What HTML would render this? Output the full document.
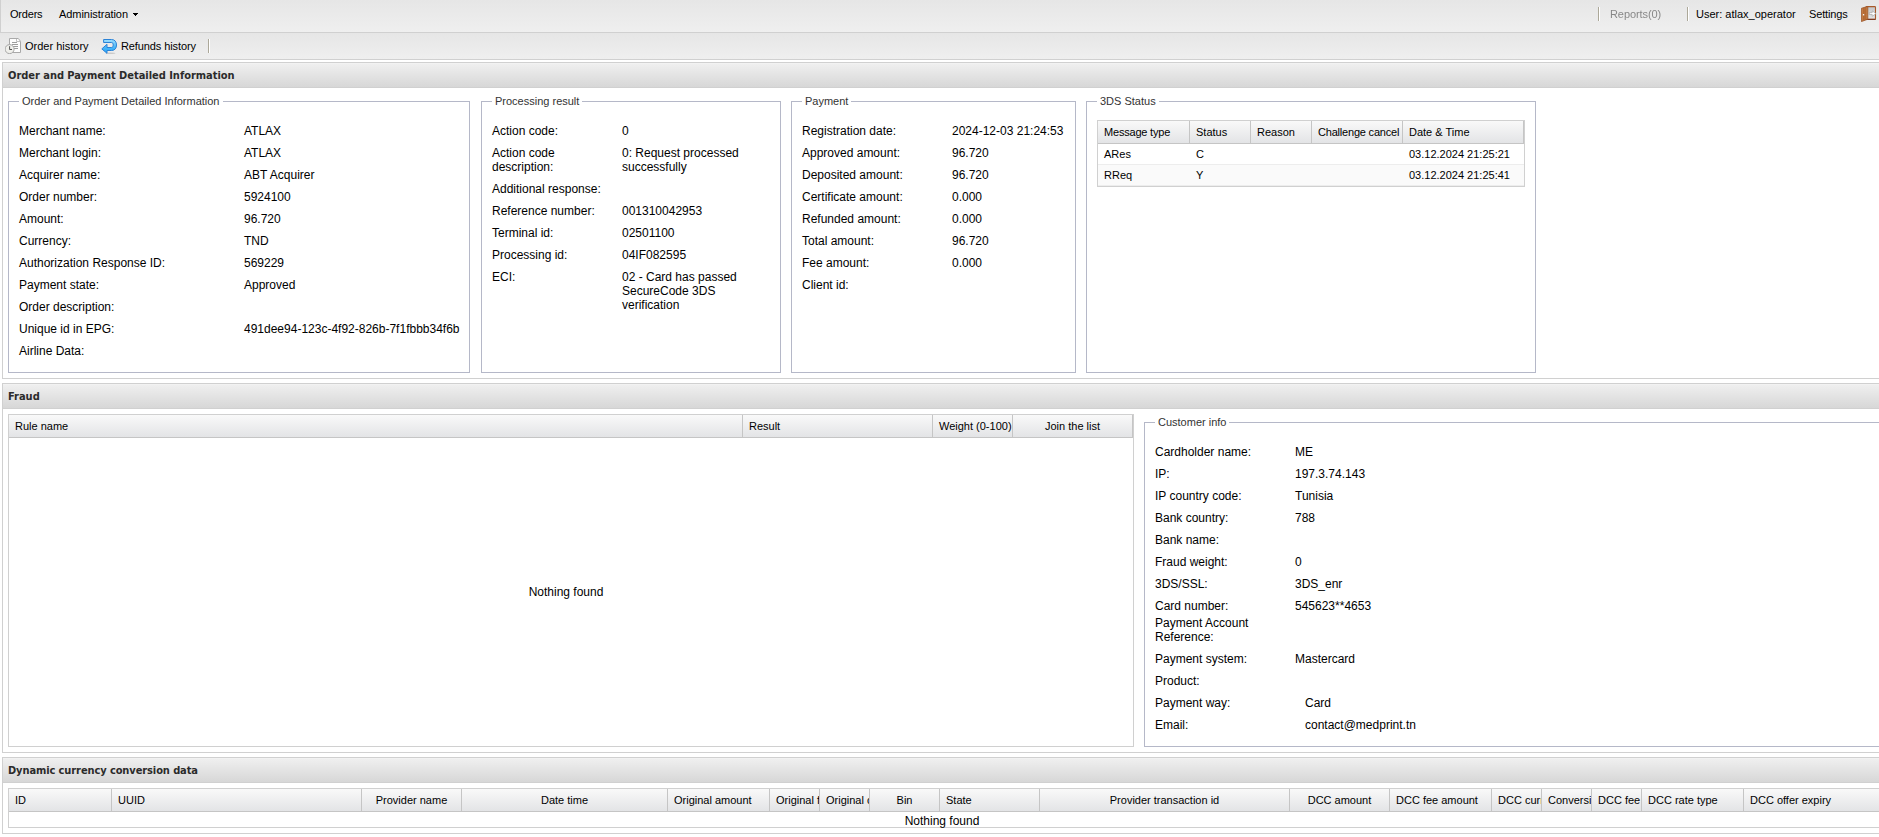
<!DOCTYPE html>
<html>
<head>
<meta charset="utf-8">
<title>Order and Payment Detailed Information</title>
<style>
html,body{margin:0;padding:0;}
body{width:1879px;height:837px;overflow:hidden;background:#fff;position:relative;font-family:"Liberation Sans",sans-serif;font-size:12px;color:#000;}
*{box-sizing:border-box;}
.abs{position:absolute;}
.tb1{left:0;top:0;width:1879px;height:33px;border-left:1px solid #d0d0d0;border-bottom:1px solid #d0d0d0;background:linear-gradient(#e6e6e6,#efefef);}
.tb2{left:0;top:33px;width:1879px;height:27px;border-bottom:1px solid #d0d0d0;background:linear-gradient(#e6e6e6,#efefef);}
.t{position:absolute;white-space:nowrap;line-height:14px;font-size:11px;}
.sep{position:absolute;width:2px;height:14px;border-left:1px solid #aca899;border-right:1px solid #fff;}
.panel{position:absolute;left:2px;width:1890px;border:1px solid #d0d0d0;background:#fff;}
.ph{position:absolute;left:-1px;top:-1px;right:-1px;height:26px;border:1px solid #d0d0d0;background:linear-gradient(#f0f0f0,#d7d7d7);box-shadow:inset 0 1px 0 #f2f2f2;}
.ph span{position:absolute;left:5px;top:5px;font-family:"DejaVu Sans Condensed","Liberation Sans",sans-serif;font-weight:bold;font-size:11px;line-height:15px;color:#2b2b2b;white-space:nowrap;}
.fs{position:absolute;border:1px solid #b5b8c8;}
.lg{position:absolute;top:-8px;left:10px;background:#fff;padding:0 3px;font-size:11px;line-height:14px;color:#333;white-space:nowrap;}
.l{position:absolute;line-height:14px;white-space:nowrap;}
.nf{position:absolute;text-align:center;line-height:14px;}
.gr.alt{background:#fafafa;}
.grid{position:absolute;border:1px solid #d0d0d0;background:#fff;}
.gh{position:absolute;left:0;top:0;right:0;height:23px;border-bottom:1px solid #c5c5c5;background:linear-gradient(#f9f9f9,#e3e4e6);}
.gc{position:absolute;top:0;height:22px;border-right:1px solid #c5c5c5;font-size:11px;line-height:13px;padding:5px 6px 0 6px;white-space:nowrap;overflow:hidden;}
.gr{position:absolute;left:0;right:0;height:21px;border-bottom:1px solid #ededed;font-size:11px;}
.gr span{position:absolute;top:4px;line-height:13px;white-space:nowrap;}
</style>
</head>
<body>
<!-- top toolbar -->
<div class="abs tb1">
  <span class="t" style="left:9px;top:7px;letter-spacing:-0.2px;">Orders</span>
  <span class="t" style="left:58px;top:7px;letter-spacing:-0.05px;">Administration</span>
  <svg class="abs" style="left:132px;top:13px" width="5" height="3" viewBox="0 0 5 3" shape-rendering="crispEdges"><path d="M0 0h5v1h-1v1h-1v1h-1v-1h-1v-1h-1z" fill="#000"/></svg>
  <div class="sep" style="left:1597px;top:7px;"></div>
  <span class="t" style="left:1609px;top:7px;color:#222;opacity:0.5;will-change:opacity;letter-spacing:-0.08px;">Reports(0)</span>
  <div class="sep" style="left:1686px;top:7px;"></div>
  <span class="t" style="left:1695px;top:7px;">User: atlax_operator</span>
  <span class="t" style="left:1808px;top:7px;letter-spacing:-0.14px;">Settings</span>
  <svg class="abs" style="left:1860px;top:6px" width="16" height="16" viewBox="0 0 16 16">
    <defs><linearGradient id="dg" x1="0" y1="0" x2="0" y2="1"><stop offset="0" stop-color="#c4c6c8"/><stop offset="1" stop-color="#e4e6e8"/></linearGradient>
    <linearGradient id="dw" x1="0" y1="0" x2="1" y2="0"><stop offset="0" stop-color="#c9844a"/><stop offset="0.5" stop-color="#b96f38"/><stop offset="1" stop-color="#c98247"/></linearGradient></defs>
    <rect x="5" y="0.6" width="9.5" height="12.8" rx="0.8" fill="url(#dg)" stroke="#a85a2a" stroke-width="1.1"/>
    <path d="M5 13.4H14.6" stroke="#7c3b24" stroke-width="1.1"/>
    <path d="M0.4 2.3L6.8 0.4V13.2L0.4 15.6Z" fill="url(#dw)" stroke="#9a5428" stroke-width="0.8" stroke-linejoin="round"/>
    <path d="M2.6 1.9V14.6M4.7 1.2V13.9" stroke="#a9602f" stroke-width="0.6"/>
    <rect x="1.9" y="8" width="1.3" height="1.4" fill="#f4f4f4"/>
    <path d="M8.3 6.7H11.2V4.9L15 7.6L11.2 10.3V8.5H8.3Z" fill="#fff" stroke="#a8a8a8" stroke-width="0.7"/>
  </svg>
</div>
<!-- second toolbar -->
<div class="abs tb2">
  <svg class="abs" style="left:5px;top:5px" width="16" height="16" viewBox="0 0 16 16">
    <path d="M4.5 0.5H13.3L15.5 3.3V14.5H4.5Z" fill="#fdfdfd" stroke="#a9a9a9" stroke-width="1"/>
    <path d="M11.5 0.8V3.5H15.2" fill="none" stroke="#b9b9b9" stroke-width="0.9"/>
    <path d="M7 4.5H12M7 6.5H13M8 8.5H13M9 10.5H13" stroke="#9c9c9c" stroke-width="1"/>
    <circle cx="4.6" cy="11.1" r="4.5" fill="#efefeb" stroke="#a6a6a6" stroke-width="1"/>
    <path d="M4.6 8.2V11.5H7" fill="none" stroke="#444" stroke-width="0.9"/>
  </svg>
  <span class="t" style="left:25px;top:6px;">Order history</span>
  <svg class="abs" style="left:101px;top:5px" width="16" height="16" viewBox="0 0 16 16">
    <defs><linearGradient id="rg" x1="0" y1="0" x2="0" y2="1"><stop offset="0" stop-color="#9fe0ff"/><stop offset="0.55" stop-color="#4cb8f6"/><stop offset="1" stop-color="#22a6ff"/></linearGradient></defs>
    <ellipse cx="9.5" cy="15.2" rx="5" ry="0.7" fill="#000" opacity="0.15"/>
    <path d="M2.6 1.5H10.5C14 1.5 15.5 4 15.5 7C15.5 10 14 12.5 10.5 12.5H6V15.3L0.8 10.9L6 6.3V9.5H10.3C11.8 9.5 12.2 8.4 12.2 7C12.2 5.6 11.8 4.5 10.3 4.5H2.6Z" fill="url(#rg)" stroke="#2b82d6" stroke-width="1" stroke-linejoin="round"/>
  </svg>
  <span class="t" style="left:121px;top:6px;letter-spacing:-0.1px;">Refunds history</span>
  <div class="sep" style="left:208px;top:6px;"></div>
</div>

<!-- Panel 1 -->
<div class="panel" style="top:62px;height:317px;">
  <div class="ph"><span style="letter-spacing:-0.03px;">Order and Payment Detailed Information</span></div>
<div class="fs" style="left:5px;top:38px;width:462px;height:272px;"><div class="lg">Order and Payment Detailed Information</div>
<div class="l" style="left:10px;top:22px;">Merchant name:</div>
<div class="l" style="left:235px;top:22px;">ATLAX</div>
<div class="l" style="left:10px;top:44px;">Merchant login:</div>
<div class="l" style="left:235px;top:44px;">ATLAX</div>
<div class="l" style="left:10px;top:66px;">Acquirer name:</div>
<div class="l" style="left:235px;top:66px;">ABT Acquirer</div>
<div class="l" style="left:10px;top:88px;">Order number:</div>
<div class="l" style="left:235px;top:88px;">5924100</div>
<div class="l" style="left:10px;top:110px;">Amount:</div>
<div class="l" style="left:235px;top:110px;">96.720</div>
<div class="l" style="left:10px;top:132px;">Currency:</div>
<div class="l" style="left:235px;top:132px;">TND</div>
<div class="l" style="left:10px;top:154px;">Authorization Response ID:</div>
<div class="l" style="left:235px;top:154px;">569229</div>
<div class="l" style="left:10px;top:176px;">Payment state:</div>
<div class="l" style="left:235px;top:176px;">Approved</div>
<div class="l" style="left:10px;top:198px;">Order description:</div>
<div class="l" style="left:10px;top:220px;">Unique id in EPG:</div>
<div class="l" style="left:235px;top:220px;">491dee94-123c-4f92-826b-7f1fbbb34f6b</div>
<div class="l" style="left:10px;top:242px;">Airline Data:</div>
</div>
<div class="fs" style="left:478px;top:38px;width:300px;height:272px;"><div class="lg">Processing result</div>
<div class="l" style="left:10px;top:22px;">Action code:</div>
<div class="l" style="left:140px;top:22px;">0</div>
<div class="l" style="left:10px;top:44px;">Action code<br>description:</div>
<div class="l" style="left:140px;top:44px;">0: Request processed<br>successfully</div>
<div class="l" style="left:10px;top:80px;">Additional response:</div>
<div class="l" style="left:10px;top:102px;">Reference number:</div>
<div class="l" style="left:140px;top:102px;">001310042953</div>
<div class="l" style="left:10px;top:124px;">Terminal id:</div>
<div class="l" style="left:140px;top:124px;">02501100</div>
<div class="l" style="left:10px;top:146px;">Processing id:</div>
<div class="l" style="left:140px;top:146px;">04IF082595</div>
<div class="l" style="left:10px;top:168px;">ECI:</div>
<div class="l" style="left:140px;top:168px;">02 - Card has passed<br>SecureCode 3DS<br>verification</div>
</div>
<div class="fs" style="left:788px;top:38px;width:285px;height:272px;"><div class="lg">Payment</div>
<div class="l" style="left:10px;top:22px;">Registration date:</div>
<div class="l" style="left:160px;top:22px;">2024-12-03 21:24:53</div>
<div class="l" style="left:10px;top:44px;">Approved amount:</div>
<div class="l" style="left:160px;top:44px;">96.720</div>
<div class="l" style="left:10px;top:66px;">Deposited amount:</div>
<div class="l" style="left:160px;top:66px;">96.720</div>
<div class="l" style="left:10px;top:88px;">Certificate amount:</div>
<div class="l" style="left:160px;top:88px;">0.000</div>
<div class="l" style="left:10px;top:110px;">Refunded amount:</div>
<div class="l" style="left:160px;top:110px;">0.000</div>
<div class="l" style="left:10px;top:132px;">Total amount:</div>
<div class="l" style="left:160px;top:132px;">96.720</div>
<div class="l" style="left:10px;top:154px;">Fee amount:</div>
<div class="l" style="left:160px;top:154px;">0.000</div>
<div class="l" style="left:10px;top:176px;">Client id:</div>
</div>
<div class="fs" style="left:1083px;top:38px;width:450px;height:272px;"><div class="lg">3DS Status</div>
<div class="grid" style="left:10px;top:18px;width:428px;height:67px;"><div class="gh">
<div class="gc" style="left:0px;width:92px;letter-spacing:-0.2px;">Message type</div>
<div class="gc" style="left:92px;width:61px;">Status</div>
<div class="gc" style="left:153px;width:61px;">Reason</div>
<div class="gc" style="left:214px;width:91px;letter-spacing:-0.2px;">Challenge cancel</div>
<div class="gc" style="left:305px;width:121px;">Date &amp; Time</div>
</div>
<div class="gr" style="top:23px;"><span style="left:6px;">ARes</span><span style="left:98px;">C</span><span style="left:311px;">03.12.2024 21:25:21</span></div>
<div class="gr alt" style="top:44px;"><span style="left:6px;">RReq</span><span style="left:98px;">Y</span><span style="left:311px;">03.12.2024 21:25:41</span></div>

</div>
</div>
</div>
<!-- Panel 2 -->
<div class="panel" style="top:383px;height:370px;">
  <div class="ph"><span>Fraud</span></div>
<div class="grid" style="left:5px;top:30px;width:1126px;height:333px;"><div class="gh">
<div class="gc" style="left:0px;width:734px;">Rule name</div>
<div class="gc" style="left:734px;width:190px;">Result</div>
<div class="gc" style="left:924px;width:80px;">Weight (0-100)</div>
<div class="gc" style="left:1004px;width:120px;text-align:center;">Join the list</div>
</div>
<div class="nf" style="left:0;width:1114px;top:170px;">Nothing found</div>

</div>
<div class="fs" style="left:1141px;top:38px;width:757px;height:325px;"><div class="lg">Customer info</div>
<div class="l" style="left:10px;top:22px;">Cardholder name:</div>
<div class="l" style="left:150px;top:22px;">ME</div>
<div class="l" style="left:10px;top:44px;">IP:</div>
<div class="l" style="left:150px;top:44px;">197.3.74.143</div>
<div class="l" style="left:10px;top:66px;">IP country code:</div>
<div class="l" style="left:150px;top:66px;">Tunisia</div>
<div class="l" style="left:10px;top:88px;">Bank country:</div>
<div class="l" style="left:150px;top:88px;">788</div>
<div class="l" style="left:10px;top:110px;">Bank name:</div>
<div class="l" style="left:10px;top:132px;">Fraud weight:</div>
<div class="l" style="left:150px;top:132px;">0</div>
<div class="l" style="left:10px;top:154px;">3DS/SSL:</div>
<div class="l" style="left:150px;top:154px;">3DS_enr</div>
<div class="l" style="left:10px;top:176px;">Card number:</div>
<div class="l" style="left:150px;top:176px;">545623**4653</div>
<div class="l" style="left:10px;top:193px;">Payment Account<br>Reference:</div>
<div class="l" style="left:10px;top:229px;">Payment system:</div>
<div class="l" style="left:150px;top:229px;">Mastercard</div>
<div class="l" style="left:10px;top:251px;">Product:</div>
<div class="l" style="left:10px;top:273px;">Payment way:</div>
<div class="l" style="left:160px;top:273px;">Card</div>
<div class="l" style="left:10px;top:295px;">Email:</div>
<div class="l" style="left:160px;top:295px;">contact@medprint.tn</div>
</div>
</div>
<!-- Panel 3 -->
<div class="panel" style="top:757px;height:77px;">
  <div class="ph"><span style="letter-spacing:-0.1px;">Dynamic currency conversion data</span></div>
<div class="grid" style="left:5px;top:30px;width:1894px;height:40px;"><div class="gh">
<div class="gc" style="left:0px;width:103px;">ID</div>
<div class="gc" style="left:103px;width:250px;">UUID</div>
<div class="gc" style="left:353px;width:100px;text-align:center;">Provider name</div>
<div class="gc" style="left:453px;width:206px;text-align:center;">Date time</div>
<div class="gc" style="left:659px;width:102px;">Original amount</div>
<div class="gc" style="left:761px;width:50px;">Original fee</div>
<div class="gc" style="left:811px;width:50px;">Original currency</div>
<div class="gc" style="left:861px;width:70px;text-align:center;">Bin</div>
<div class="gc" style="left:931px;width:100px;">State</div>
<div class="gc" style="left:1031px;width:250px;text-align:center;">Provider transaction id</div>
<div class="gc" style="left:1281px;width:100px;text-align:center;">DCC amount</div>
<div class="gc" style="left:1381px;width:102px;">DCC fee amount</div>
<div class="gc" style="left:1483px;width:50px;">DCC currency</div>
<div class="gc" style="left:1533px;width:50px;">Conversion rate</div>
<div class="gc" style="left:1583px;width:50px;">DCC fee</div>
<div class="gc" style="left:1633px;width:102px;">DCC rate type</div>
<div class="gc" style="left:1735px;width:157px;">DCC offer expiry</div>
</div>
<div class="nf" style="left:0;width:1866px;top:25px;">Nothing found</div>

</div>
</div>
</body>
</html>
